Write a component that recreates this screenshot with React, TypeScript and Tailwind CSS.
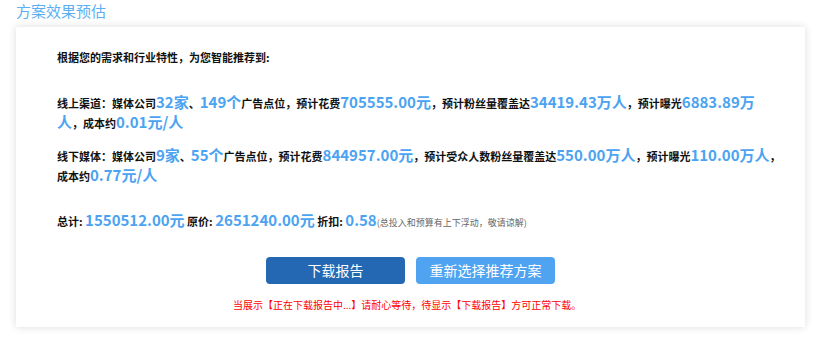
const font = { fontFamily: '"Noto Sans CJK SC", "Microsoft YaHei", sans-serif' };

function Num({ children }: { children: React.ReactNode }) {
	return <span className="text-[15px] leading-none font-semibold text-[#4ba3f1]">{children}</span>;
}

export default function App() {
	return (
		<div className="min-h-[342px] w-[830px] bg-white px-4" style={font}>
			<h2 className="text-[15px] leading-[22px] text-[#5cb0f2]">方案效果预估</h2>
			<div className="mt-[5px] w-[789px] bg-white pt-5 pb-[14px] shadow-[0_0_8px_rgba(0,0,0,0.14)]">
				<div className="pl-[41px] text-[11px] font-bold text-[#111]">
					<p className="leading-5">根据您的需求和行业特性，为您智能推荐到:</p>

					<p className="mt-[26px] whitespace-nowrap leading-5">
						线上渠道：媒体公司<Num>32家</Num>、<Num>149个</Num>广告点位，预计花费
						<Num>705555.00元</Num>，预计粉丝量覆盖达<Num>34419.43万人</Num>，预计曝光
						<Num>6883.89万</Num>
						<br />
						<Num>人</Num>，成本约<Num>0.01元/人</Num>
					</p>

					<p className="mt-[13px] whitespace-nowrap leading-5">
						线下媒体：媒体公司<Num>9家</Num>、<Num>55个</Num>广告点位，预计花费
						<Num>844957.00元</Num>，预计受众人数粉丝量覆盖达<Num>550.00万人</Num>，预计曝光
						<Num>110.00万人</Num>，
						<br />
						成本约<Num>0.77元/人</Num>
					</p>

					<p className="mt-[25px] whitespace-nowrap leading-5">
						总计: <Num>1550512.00元</Num> 原价: <Num>2651240.00元</Num> 折扣: <Num>0.58</Num>
						<span className="text-[9px] font-normal text-[#666]">(总投入和预算有上下浮动，敬请谅解)</span>
					</p>
				</div>

				<div className="mt-6 flex justify-center gap-[11px]">
					<button className="h-[27px] w-[139px] rounded-[4px] bg-[#2468b4] text-[14px] text-white">
						下载报告
					</button>
					<button className="h-[27px] w-[139px] rounded-[4px] bg-[#4fa3f1] text-[14px] text-white">
						重新选择推荐方案
					</button>
				</div>

				<p className="mt-[13px] pl-[217px] text-[10px] leading-4 text-[#ff0000]">
					当展示【正在下载报告中...】请耐心等待，待显示【下载报告】方可正常下载。
				</p>
			</div>
		</div>
	);
}
